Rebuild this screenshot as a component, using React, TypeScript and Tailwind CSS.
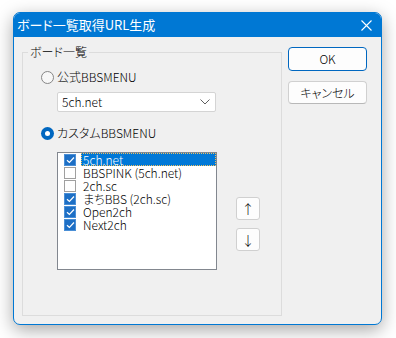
import React from "react";

const font = { fontFamily: '"Noto Sans CJK JP", "Noto Sans", sans-serif' };

function Radio({ checked }: { checked: boolean }) {
  return checked ? (
    <span className="flex h-[13px] w-[13px] items-center justify-center rounded-full bg-[#0067c0]">
      <span className="h-[5px] w-[5px] rounded-full bg-white" />
    </span>
  ) : (
    <span className="h-[13px] w-[13px] rounded-full border border-[#868686] bg-[#f7f7f7]" />
  );
}

function Check({ checked }: { checked: boolean }) {
  return checked ? (
    <span className="flex h-[12px] w-[12px] items-center justify-center border border-[#4a8fd6] bg-[#1d6fc5]">
      <svg width="9" height="8" viewBox="0 0 9 8">
        <path d="M1 4.2 L3.4 6.5 L8 1.5" stroke="white" strokeWidth="1.2" fill="none" />
      </svg>
    </span>
  ) : (
    <span className="h-[12px] w-[12px] border border-[#a0a0a0] bg-white" />
  );
}

const items: { label: string; checked: boolean }[] = [
  { label: "5ch.net", checked: true },
  { label: "BBSPINK (5ch.net)", checked: false },
  { label: "2ch.sc", checked: false },
  { label: "まちBBS (2ch.sc)", checked: true },
  { label: "Open2ch", checked: true },
  { label: "Next2ch", checked: true },
];

export default function App() {
  return (
    <div
      className="h-[338px] w-[396px] bg-white pl-[13px] pt-[12px] text-[12px] font-light leading-[14px] text-black [font-feature-settings:'palt']"
      style={font}
    >
      <div className="flex h-[313px] w-[369px] flex-col overflow-hidden rounded-[7px] border border-[#0078d4] bg-[#f0f0f0] shadow-[0_5px_18px_rgba(0,0,0,0.35)]">
        {/* Title bar */}
        <div className="flex h-[24px] shrink-0 items-center justify-between bg-[#0078d4] pl-[3px] pr-[9px] text-white">
          <span className="text-[13px] font-normal">ボード一覧取得URL生成</span>
          <svg width="11" height="11" viewBox="0 0 11 11">
            <path d="M0.5 0.5 L10.5 10.5 M10.5 0.5 L0.5 10.5" stroke="white" strokeWidth="1.1" />
          </svg>
        </div>
        {/* Client */}
        <div className="flex flex-1 pl-[8px] pt-[15px]">
          {/* Group box */}
          <div className="relative h-[264px] w-[260px] border border-[#dcdcdc]">
            <span className="absolute left-[5px] top-[-8px] bg-[#f0f0f0] px-[2px]">ボード一覧</span>
            <div className="flex flex-col pl-[18px] pt-[16px]">
              <div className="flex h-[16px] items-center gap-[3px]">
                <Radio checked={false} />
                <span>公式BBSMENU</span>
              </div>
              <div className="ml-[16px] mt-[7px] flex h-[20px] w-[159px] items-center justify-between rounded-[2px] border border-[#d4d4d4] bg-white pl-[4px] pr-[5px]">
                <span>5ch.net</span>
                <svg width="10" height="6" viewBox="0 0 10 6">
                  <path d="M0.5 0.5 L5 5 L9.5 0.5" stroke="#606060" strokeWidth="1" fill="none" />
                </svg>
              </div>
              <div className="mt-[13px] flex h-[16px] items-center gap-[3px]">
                <Radio checked={true} />
                <span>カスタムBBSMENU</span>
              </div>
              <div className="mt-[11px] flex">
                <div className="ml-[16px] h-[118px] w-[160px] border border-[#82878f] bg-white pl-[6px]">
                  {items.map((it, i) => (
                    <div key={i} className="flex h-[13px] items-center gap-[5px] leading-[13px]">
                      <Check checked={it.checked} />
                      {i === 0 ? (
                        <span className="flex h-[13px] flex-1 items-center border border-dotted border-[#f0c060] bg-[#0078d7] pl-[1px] text-white">
                          {it.label}
                        </span>
                      ) : (
                        <span className="pl-[2px]">{it.label}</span>
                      )}
                    </div>
                  ))}
                </div>
                <div className="ml-[19px] mt-[45px] flex flex-col gap-[8px]">
                  <div className="flex h-[23px] w-[24px] items-center justify-center rounded-[3px] border border-[#d0d0d0] bg-[#fdfdfd] text-[13px]">
                    ↑
                  </div>
                  <div className="flex h-[23px] w-[24px] items-center justify-center rounded-[3px] border border-[#d0d0d0] bg-[#fdfdfd] text-[13px]">
                    ↓
                  </div>
                </div>
              </div>
            </div>
          </div>
          {/* Buttons */}
          <div className="ml-[6px] mt-[-5px] flex flex-col gap-[10px]">
            <div className="flex h-[24px] w-[79px] items-center justify-center rounded-[4px] border border-[#0067c0] bg-[#fdfdfd]">
              OK
            </div>
            <div className="flex h-[23px] w-[79px] items-center justify-center rounded-[4px] border border-[#d0d0d0] border-b-[#b8b8b8] bg-[#fdfdfd]">
              キャンセル
            </div>
          </div>
        </div>
      </div>
    </div>
  );
}
